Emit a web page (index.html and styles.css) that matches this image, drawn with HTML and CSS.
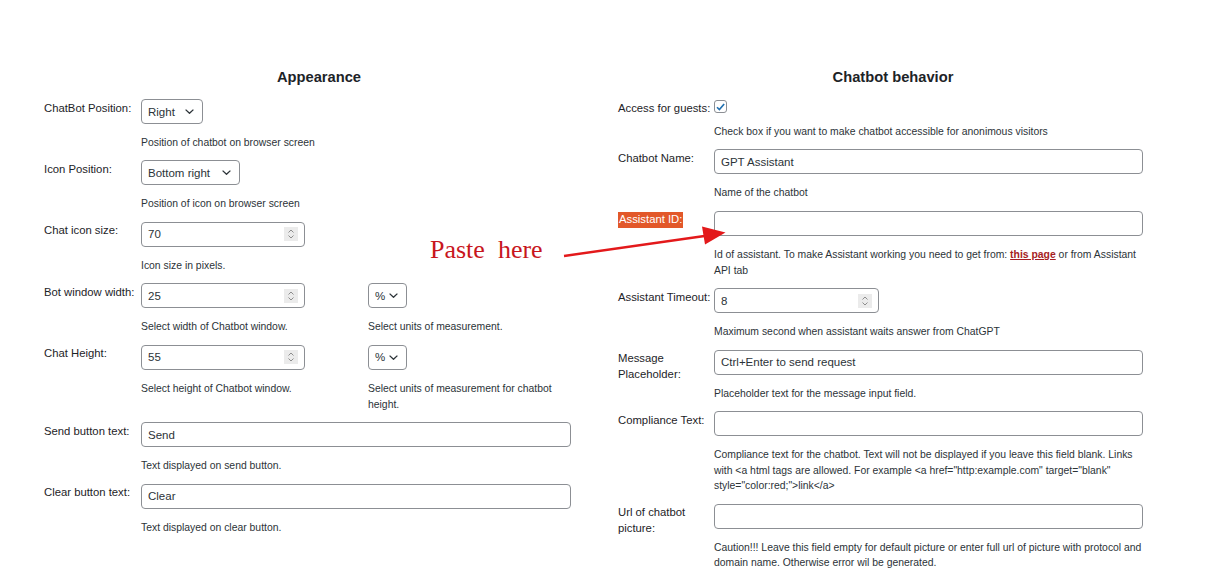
FILE: index.html
```html
<!DOCTYPE html>
<html lang="en">
<head>
<meta charset="utf-8">
<title>Chatbot settings</title>
<link rel="stylesheet" href="styles.css">
</head>
<body>
<div class="page">
  <section class="col">
    <h2 class="col-title">Appearance</h2>

    <div class="field">
      <label class="label">ChatBot Position:</label>
      <div class="ctl">
        <span class="sel"><select class="w62"><option>Right</option></select><svg width="9" height="5" viewBox="0 0 9 5"><path d="M0.6 0.6 L4.5 4.3 L8.4 0.6" fill="none" stroke="#2c3338" stroke-width="1.3"/></svg></span>
      </div>
      <div class="desc">Position of chatbot on browser screen</div>
    </div>

    <div class="field">
      <label class="label">Icon Position:</label>
      <div class="ctl">
        <span class="sel"><select class="w99"><option>Bottom right</option></select><svg width="9" height="5" viewBox="0 0 9 5"><path d="M0.6 0.6 L4.5 4.3 L8.4 0.6" fill="none" stroke="#2c3338" stroke-width="1.3"/></svg></span>
      </div>
      <div class="desc">Position of icon on browser screen</div>
    </div>

    <div class="field">
      <label class="label">Chat icon size:</label>
      <div class="ctl">
        <span class="num"><input type="text" value="70"><svg class="spin" width="14" height="14" viewBox="0 0 14 14"><rect width="14" height="14" fill="#ebebeb"/><path d="M4.5 5.5 L7 3 L9.5 5.5" fill="none" stroke="#8d8d8d" stroke-width="1"/><path d="M4.5 8.5 L7 11 L9.5 8.5" fill="none" stroke="#8d8d8d" stroke-width="1"/></svg></span>
      </div>
      <div class="desc">Icon size in pixels.</div>
    </div>

    <div class="field">
      <label class="label">Bot window width:</label>
      <div class="ctl half">
        <span class="num"><input type="text" value="25"><svg class="spin" width="14" height="14" viewBox="0 0 14 14"><rect width="14" height="14" fill="#ebebeb"/><path d="M4.5 5.5 L7 3 L9.5 5.5" fill="none" stroke="#8d8d8d" stroke-width="1"/><path d="M4.5 8.5 L7 11 L9.5 8.5" fill="none" stroke="#8d8d8d" stroke-width="1"/></svg></span>
      </div>
      <div class="ctl unit">
        <span class="sel"><select class="w39"><option>%</option></select><svg width="9" height="5" viewBox="0 0 9 5"><path d="M0.6 0.6 L4.5 4.3 L8.4 0.6" fill="none" stroke="#2c3338" stroke-width="1.3"/></svg></span>
      </div>
      <div class="desc half">Select width of Chatbot window.</div>
      <div class="desc unit">Select units of measurement.</div>
    </div>

    <div class="field">
      <label class="label">Chat Height:</label>
      <div class="ctl half">
        <span class="num"><input type="text" value="55"><svg class="spin" width="14" height="14" viewBox="0 0 14 14"><rect width="14" height="14" fill="#ebebeb"/><path d="M4.5 5.5 L7 3 L9.5 5.5" fill="none" stroke="#8d8d8d" stroke-width="1"/><path d="M4.5 8.5 L7 11 L9.5 8.5" fill="none" stroke="#8d8d8d" stroke-width="1"/></svg></span>
      </div>
      <div class="ctl unit">
        <span class="sel"><select class="w39"><option>%</option></select><svg width="9" height="5" viewBox="0 0 9 5"><path d="M0.6 0.6 L4.5 4.3 L8.4 0.6" fill="none" stroke="#2c3338" stroke-width="1.3"/></svg></span>
      </div>
      <div class="desc half">Select height of Chatbot window.</div>
      <div class="desc unit">Select units of measurement for chatbot height.</div>
    </div>

    <div class="field">
      <label class="label">Send button text:</label>
      <div class="ctl"><input class="text" type="text" value="Send"></div>
      <div class="desc">Text displayed on send button.</div>
    </div>

    <div class="field">
      <label class="label">Clear button text:</label>
      <div class="ctl"><input class="text" type="text" value="Clear"></div>
      <div class="desc">Text displayed on clear button.</div>
    </div>
  </section>

  <section class="col col-right">
    <h2 class="col-title">Chatbot behavior</h2>

    <div class="field">
      <label class="label">Access for guests:</label>
      <div class="ctl">
        <span class="check"><svg width="12" height="12" viewBox="0 0 12 12"><path d="M2.2 6.3 L4.8 8.9 L10 2.8" fill="none" stroke="#2271b1" stroke-width="1.8"/></svg></span>
      </div>
      <div class="desc">Check box if you want to make chatbot accessible for anonimous visitors</div>
    </div>

    <div class="field">
      <label class="label">Chatbot Name:</label>
      <div class="ctl"><input class="text" type="text" value="GPT Assistant"></div>
      <div class="desc">Name of the chatbot</div>
    </div>

    <div class="field">
      <label class="label"><span class="hl">Assistant ID:</span></label>
      <div class="ctl"><input class="text" type="text" value=""></div>
      <div class="desc">Id of assistant. To make Assistant working you need to get from: <a class="lnk" href="#">this page</a> or from Assistant API tab</div>
    </div>

    <div class="field">
      <label class="label">Assistant Timeout:</label>
      <div class="ctl">
        <span class="num num165"><input type="text" value="8"><svg class="spin" width="14" height="14" viewBox="0 0 14 14"><rect width="14" height="14" fill="#ebebeb"/><path d="M4.5 5.5 L7 3 L9.5 5.5" fill="none" stroke="#8d8d8d" stroke-width="1"/><path d="M4.5 8.5 L7 11 L9.5 8.5" fill="none" stroke="#8d8d8d" stroke-width="1"/></svg></span>
      </div>
      <div class="desc">Maximum second when assistant waits answer from ChatGPT</div>
    </div>

    <div class="field">
      <label class="label">Message Placeholder:</label>
      <div class="ctl"><input class="text" type="text" value="Ctrl+Enter to send request"></div>
      <div class="desc">Placeholder text for the message input field.</div>
    </div>

    <div class="field">
      <label class="label">Compliance Text:</label>
      <div class="ctl"><input class="text" type="text" value=""></div>
      <div class="desc">Compliance text for the chatbot. Text will not be displayed if you leave this field blank. Links with &lt;a html tags are allowed. For example &lt;a href="http:example.com" target="blank" style="color:red;"&gt;link&lt;/a&gt;</div>
    </div>

    <div class="field">
      <label class="label">Url of chatbot picture:</label>
      <div class="ctl"><input class="text" type="text" value=""></div>
      <div class="desc">Caution!!! Leave this field empty for default picture or enter full url of picture with protocol and domain name. Otherwise error wil be generated.</div>
    </div>
  </section>

  <div class="note">Paste&nbsp; here</div>
  <svg class="arrow" width="1216" height="572" viewBox="0 0 1216 572">
    <line x1="564" y1="256" x2="708" y2="235.5" stroke="#e3191b" stroke-width="2.4"/>
    <polygon points="702,226.5 725.5,232.5 705,244.5" fill="#e3191b"/>
  </svg>
</div>
</body>
</html>
```

FILE: styles.css
```css
* { box-sizing: border-box; }

body {
  margin: 0;
  background: #fff;
  font-family: "Liberation Sans", Arial, sans-serif;
  color: #1d2327;
}

.page {
  position: relative;
  display: grid;
  grid-template-columns: 574px 574px;
  padding: 67px 0 0 32px;
}

.col { padding: 0 12px; }

.col-title {
  margin: 0 0 12px;
  font-size: 14.7px;
  line-height: 20px;
  font-weight: 700;
  text-align: center;
  color: #1d2327;
}

.field {
  display: grid;
  grid-template-columns: 97px 227px 203px;
  grid-template-rows: auto auto;
  row-gap: 10px;
  margin-bottom: 9.9px;
}

.col-right .field { grid-template-columns: 96px 429px; }

.label {
  grid-column: 1;
  grid-row: 1 / span 2;
  padding-top: 1.5px;
  font-size: 11.3px;
  line-height: 15.6px;
  color: #1d2327;
}

.ctl {
  grid-column: 2 / -1;
  grid-row: 1;
  display: flex;
  align-items: flex-start;
}
.ctl.half { grid-column: 2; }
.ctl.unit { grid-column: 3; }

.desc {
  grid-column: 2 / -1;
  grid-row: 2;
  padding-top: 1px;
  font-size: 10.4px;
  line-height: 15.6px;
  color: #2c3338;
}
.desc.half { grid-column: 2; }
.desc.unit { grid-column: 3; }

.text {
  width: 100%;
  height: 25px;
  margin: 0;
  padding: 0 6px;
  border: 1px solid #8c8f94;
  border-radius: 4px;
  background: #fff;
  font-family: "Liberation Sans", Arial, sans-serif;
  font-size: 11.5px;
  color: #2c3338;
}

.num {
  display: inline-flex;
  align-items: center;
  width: 164px;
  height: 25px;
  border: 1px solid #8c8f94;
  border-radius: 4px;
  background: #fff;
  padding: 0 6px;
}
.num165 { width: 165px; }
.num input {
  flex: 1;
  min-width: 0;
  border: 0;
  padding: 0;
  margin: 0;
  outline: none;
  background: transparent;
  font-family: "Liberation Sans", Arial, sans-serif;
  font-size: 11.5px;
  color: #2c3338;
}
.spin { flex: none; display: block; }

.sel { display: inline-grid; }
.sel select {
  grid-area: 1 / 1;
  -webkit-appearance: none;
  appearance: none;
  height: 25px;
  margin: 0;
  padding: 0 0 0 6px;
  border: 1px solid #8c8f94;
  border-radius: 4px;
  background: #fff;
  font-family: "Liberation Sans", Arial, sans-serif;
  font-size: 11.5px;
  color: #2c3338;
}
.sel svg {
  grid-area: 1 / 1;
  justify-self: end;
  align-self: center;
  margin-right: 9px;
  pointer-events: none;
}
.w62 { width: 62px; }
.w99 { width: 99px; }
.w39 { width: 39px; }

.check {
  display: inline-flex;
  align-items: center;
  justify-content: center;
  width: 13px;
  height: 13px;
  margin-top: 1px;
  border: 1px solid #8c8f94;
  border-radius: 3px;
  background: #fff;
}

.hl {
  display: inline-block;
  padding: 0 1px;
  background: #e2582a;
  color: #fff;
}

.lnk {
  color: #a61d24;
  font-weight: 700;
  text-decoration: underline;
}

.note {
  position: absolute;
  left: 430px;
  top: 237px;
  font-family: "Liberation Serif", "Times New Roman", serif;
  font-size: 26px;
  line-height: 26px;
  color: #c8161d;
  white-space: nowrap;
}

.arrow {
  position: absolute;
  left: 0;
  top: 0;
  pointer-events: none;
}
```
